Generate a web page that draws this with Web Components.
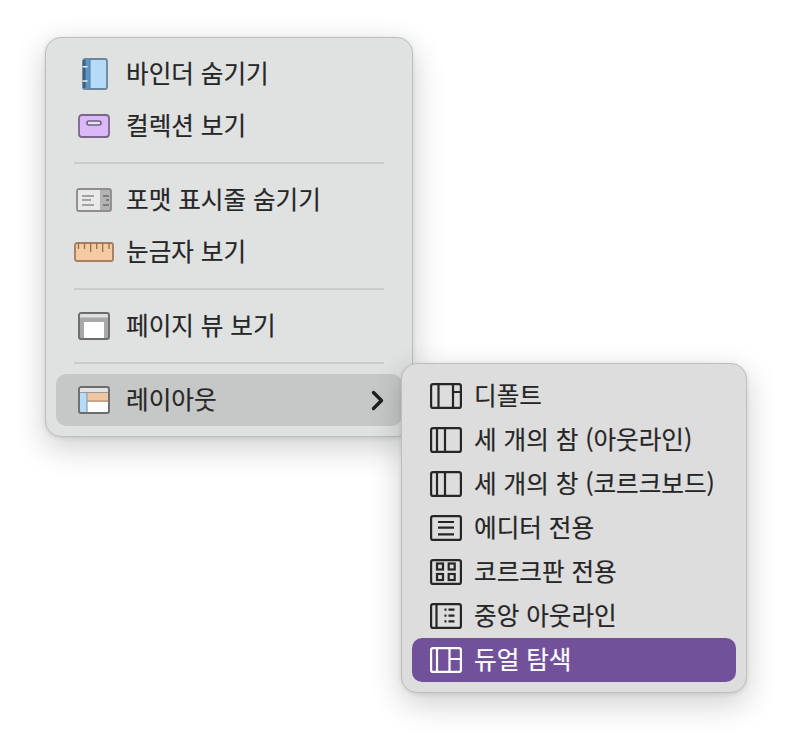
<!DOCTYPE html>
<html lang="ko">
<head>
<meta charset="utf-8">
<title>보기 메뉴</title>
<style>
  html, body { margin: 0; background: #fff; }
  body { width: 792px; height: 746px; overflow: hidden; font-family: "Noto Sans CJK KR", "Noto Sans", sans-serif; }
  .stage { position: relative; padding: 37px 0 0 45px; }
  svg { display: block; }
</style>
</head>
<body>
<div class="stage">
  <app-menu style="--menu-w: 368px">
    <menu-row><svg slot="icon" width="40" height="32" viewBox="0 0 40 32"><rect x="9" y="1" width="24" height="30" rx="2" fill="#b6dbf8" stroke="#6a8699" stroke-width="1.8"/><path d="M9 1.5h7v29H9z" fill="#5f95c5"/><path d="M9 2h2.5v28H9z" fill="#3f5f7e"/><path d="M16 1v30" stroke="#4f7aa3" stroke-width="1"/><path d="M8.5 8.7h5M8.5 23h5" stroke="#e8eef3" stroke-width="1.5"/></svg>바인더 숨기기</menu-row>
    <menu-row><svg slot="icon" width="40" height="24" viewBox="0 0 40 24"><rect x="5" y="1" width="30" height="22" rx="3" fill="#dbb9f9" stroke="#79678b" stroke-width="1.8"/><rect x="13" y="7" width="14" height="4" rx="2" fill="#e9e1ef" stroke="#6c5f80" stroke-width="1.6"/></svg>컬렉션 보기</menu-row>
    <menu-sep></menu-sep>
    <menu-row><svg slot="icon" width="40" height="24" viewBox="0 0 40 24"><rect x="3" y="1" width="34" height="22" rx="2" fill="#e9e9e9"/><path d="M26 1h10a1 1 0 0 1 1 1v20a1 1 0 0 1-1 1H26z" fill="#b3b3b3"/><rect x="3" y="1" width="34" height="22" rx="2" fill="none" stroke="#8e8e8e" stroke-width="1.9"/><path d="M8 8h12M8 12h9M8 17h12" stroke="#8a8a8a" stroke-width="1.5"/><path d="M29 8h6M32 12h3M29 17h6" stroke="#6c6c6c" stroke-width="1.5"/></svg>포맷 표시줄 숨기기</menu-row>
    <menu-row><svg slot="icon" width="40" height="20" viewBox="0 0 40 20"><rect x="1" y="1" width="38" height="18" rx="2" fill="#f5cba1" stroke="#a67f62" stroke-width="1.9"/><path d="M4.5 1v6M10.5 1v6M16.7 1v9M22.7 1v6M28.7 1v9M35 1v6" stroke="#93704f" stroke-width="1.3"/></svg>눈금자 보기</menu-row>
    <menu-sep></menu-sep>
    <menu-row><svg slot="icon" width="40" height="28" viewBox="0 0 40 28"><rect x="5" y="1" width="30" height="26" rx="2" fill="#a8a8a8"/><path d="M5 2h30v3.5H5z" fill="#e0e0e0"/><path d="M10 10h20v17H10z" fill="#fff"/><rect x="5" y="1" width="30" height="26" rx="2" fill="none" stroke="#6c6c6c" stroke-width="1.9"/></svg>페이지 뷰 보기</menu-row>
    <menu-sep></menu-sep>
    <menu-row state="open" chevron><svg slot="icon" width="40" height="28" viewBox="0 0 40 28"><rect x="5" y="1" width="30" height="26" rx="2" fill="#fff"/><path d="M5 2h30v4.5H5z" fill="#e2e2e2"/><path d="M13 7h22v7H13z" fill="#efc69f"/><path d="M13 14h22v2H13z" fill="#c8a488"/><path d="M6 7h7v19H6z" fill="#b6dbf8"/><path d="M13 6.5v20.5" stroke="#8ea4b4" stroke-width="1.3"/><path d="M5 6.5h30" stroke="#9a9a9a" stroke-width="1"/><rect x="5" y="1" width="30" height="26" rx="2" fill="none" stroke="#6c6c6c" stroke-width="1.9"/></svg>레이아웃</menu-row>
  </app-menu>

  <app-menu class="sub" style="--menu-w: 346px; --menu-bg: #dcdddc; position: absolute; left: 401px; top: 363px" dense>
    <menu-row dense><pane-icon slot="icon" kind="default"></pane-icon>디폴트</menu-row>
    <menu-row dense><pane-icon slot="icon" kind="three"></pane-icon>세 개의 참 (아웃라인)</menu-row>
    <menu-row dense><pane-icon slot="icon" kind="three"></pane-icon>세 개의 창 (코르크보드)</menu-row>
    <menu-row dense><pane-icon slot="icon" kind="editor"></pane-icon>에디터 전용</menu-row>
    <menu-row dense><pane-icon slot="icon" kind="cork"></pane-icon>코르크판 전용</menu-row>
    <menu-row dense><pane-icon slot="icon" kind="outline"></pane-icon>중앙 아웃라인</menu-row>
    <menu-row dense state="active"><pane-icon slot="icon" kind="dual"></pane-icon>듀얼 탐색</menu-row>
  </app-menu>
</div>

<script>
class AppMenu extends HTMLElement {
  connectedCallback() {
    this.attachShadow({ mode: 'open' });
    this.shadowRoot.innerHTML = `
      <style>
        :host {
          display: block;
          box-sizing: border-box;
          width: var(--menu-w);
          padding: 10px;
          border: 1px solid #bdbebe;
          border-radius: 16px;
          background: var(--menu-bg, #e0e2e2);
          box-shadow: 0 10px 32px rgba(0, 0, 0, 0.2), 0 1px 4px rgba(0, 0, 0, 0.1);
        }
      </style>
      <slot></slot>
    `;
  }
}

class MenuRow extends HTMLElement {
  connectedCallback() {
    this.attachShadow({ mode: 'open' });
    const chevron = this.hasAttribute('chevron')
      ? '<svg class="chevron" width="13" height="21" viewBox="0 0 13 21"><path d="M2.5 2.5l8 8-8 8" fill="none" stroke="#1f1f1f" stroke-width="3.4" stroke-linecap="round" stroke-linejoin="round"/></svg>'
      : '';
    this.shadowRoot.innerHTML = `
      <style>
        :host {
          display: flex;
          align-items: center;
          height: 52px;
          padding: 0 18px;
          border-radius: 10px;
          font-size: 24.6px;
          -webkit-text-stroke: 0.2px currentColor;
          color: #262626;
          white-space: nowrap;
        }
        :host([dense]) { height: 44px; }
        :host([state="open"]) { background: #c6c7c7; }
        :host([state="active"]) { background: #71519a; color: #fff; }
        .icon { display: flex; justify-content: center; width: 40px; margin-right: 12px; }
        :host([dense]) .icon { width: 32px; }
        .label { flex: 1; padding-bottom: 4px; }
      </style>
      <span class="icon"><slot name="icon"></slot></span>
      <span class="label"><slot></slot></span>
      ${chevron}
    `;
  }
}

class MenuSep extends HTMLElement {
  connectedCallback() {
    this.attachShadow({ mode: 'open' });
    this.shadowRoot.innerHTML = `
      <style>
        :host { display: block; height: 2px; margin: 10px 18px; background: #cacbcb; }
      </style>
    `;
  }
}

// the little pane diagrams in the layout submenu
const PANE_LINES = {
  default: 'M8.5 1v24M23 1v24M23 9h8',
  three: 'M7 1v24M15 1v24',
  editor: 'M8 7h16M8 12.7h16M8 19.3h16',
  cork: '',
  outline: 'M6.5 1v24M14.5 6.7h2M14.5 12.7h2M14.5 18.4h2M18.5 6.7h6M18.5 12.7h6M18.5 18.4h6',
  dual: 'M7 1v24M19.5 1v24M19.5 12h11.5'
};

class PaneIcon extends HTMLElement {
  connectedCallback() {
    this.attachShadow({ mode: 'open' });
    const kind = this.getAttribute('kind');
    const boxes = kind === 'cork'
      ? '<rect x="7" y="4.5" width="6" height="6"/><rect x="18.7" y="4.5" width="6" height="6"/><rect x="7" y="15" width="6" height="6"/><rect x="18.7" y="15" width="6" height="6"/>'
      : '';
    this.shadowRoot.innerHTML = `
      <style>
        :host { display: block; width: 32px; height: 26px; }
        svg { display: block; fill: none; stroke: currentColor; stroke-width: 2.2; }
      </style>
      <svg width="32" height="26" viewBox="0 0 32 26">
        <rect x="1.1" y="1.1" width="29.8" height="23.8" rx="2"/>
        <path d="${PANE_LINES[kind]}"/>
        ${boxes}
      </svg>
    `;
  }
}

customElements.define('app-menu', AppMenu);
customElements.define('menu-row', MenuRow);
customElements.define('menu-sep', MenuSep);
customElements.define('pane-icon', PaneIcon);
</script>
</body>
</html>
